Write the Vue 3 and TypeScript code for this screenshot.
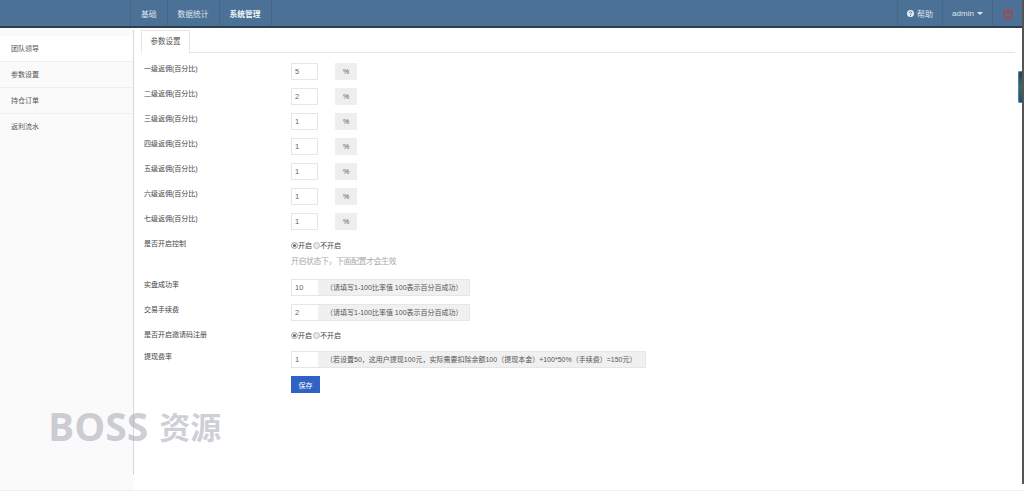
<script setup lang="ts">
const menus = ['基础', '数据统计', '系统管理']
const side = ['团队领导', '参数设置', '持仓订单', '返利流水']
const levels = [
  { label: '一级返佣(百分比)', value: '5' },
  { label: '二级返佣(百分比)', value: '2' },
  { label: '三级返佣(百分比)', value: '1' },
  { label: '四级返佣(百分比)', value: '1' },
  { label: '五级返佣(百分比)', value: '1' },
  { label: '六级返佣(百分比)', value: '1' },
  { label: '七级返佣(百分比)', value: '1' },
]
</script>

<template>
  <div class="page">
    <header class="top">
      <nav class="menus">
        <a v-for="(m, i) in menus" :key="m" class="menu" :class="{ strong: i === 2 }">{{ m }}</a>
      </nav>
      <div class="right">
        <a class="menu r help">
          <svg width="7" height="7" viewBox="0 0 16 16"><circle cx="8" cy="8" r="8" fill="#e8edf2" /><path d="M5.4 6.2c0-3.2 5.4-3.2 5.4-.2 0 2-2.6 1.900-2.600 3.900" fill="none" stroke="#4b7196" stroke-width="2.200" /><rect x="7" y="11" width="2.400" height="2.400" fill="#4b7196" /></svg>
          <span>帮助</span>
        </a>
        <a class="menu r admin">admin<i class="caret"></i></a>
        <a class="menu r power">
          <svg width="10" height="11" viewBox="0 0 16 16" fill="none" stroke="#bf3a3f" stroke-width="2.600" stroke-linecap="round"><path d="M4.800 3.700a6.400 6.400 0 1 0 6.400 0" /><path d="M8 1.500v6" /></svg>
        </a>
      </div>
    </header>
    <div class="body">
      <aside class="side">
        <a v-for="(s, i) in side" :key="s" class="side-item" :class="{ first: i === 0, last: i === 3 }">{{ s }}</a>
      </aside>
      <div class="rail"></div>
      <main class="main">
        <div class="tabs"><span class="tab">参数设置</span></div>
        <form class="form" @submit.prevent>
          <div v-for="l in levels" :key="l.label" class="row level">
            <label class="lab">{{ l.label }}</label>
            <input class="inp" :value="l.value" />
            <span class="pct">%</span>
          </div>
          <div class="row ctrl">
            <label class="lab">是否开启控制</label>
            <div>
              <div class="radios">
                <i class="radio on"></i><span>开启</span><i class="radio"></i><span>不开启</span>
              </div>
              <p class="hint">开启状态下，下面配置才会生效</p>
            </div>
          </div>
          <div class="row wide">
            <label class="lab">实盘成功率</label>
            <div class="group g1"><input class="inp" value="10" /><span class="addon">（请填写1-100比率值 100表示百分百成功）</span></div>
          </div>
          <div class="row wide">
            <label class="lab">交易手续费</label>
            <div class="group g1"><input class="inp" value="2" /><span class="addon">（请填写1-100比率值 100表示百分百成功）</span></div>
          </div>
          <div class="row invite">
            <label class="lab">是否开启邀请码注册</label>
            <div class="radios">
              <i class="radio on"></i><span>开启</span><i class="radio"></i><span>不开启</span>
            </div>
          </div>
          <div class="row wide">
            <label class="lab">提现费率</label>
            <div class="group g2"><input class="inp" value="1" /><span class="addon">（若设置50，这用户提现100元，实际需要扣除余额100（提现本金）+100*50%（手续费）=150元）</span></div>
          </div>
          <div class="row"><span class="lab"></span><button class="btn">保存</button></div>
        </form>
      </main>
    </div>
    <div class="strip"></div>
    <div class="handle"></div>
    <div class="mark"><span class="latin">BOSS</span><span class="cjk">资源</span></div>
  </div>
</template>

<style>
html, body { margin: 0; background: #fff; overflow: hidden; }
</style>

<style scoped>
.page {
  position: relative;
  width: 1024px;
  height: 492px;
  overflow: hidden;
  font-family: "Liberation Sans", "Noto Sans CJK SC", sans-serif;
  font-size: 7px;
  color: #555;
  background: #fff;
}
.top {
  display: flex;
  justify-content: space-between;
  height: 26px;
  padding: 0 2px 0 130px;
  background: #4b7196;
  border-bottom: 2px solid #2c3e50;
}
.menus, .right { display: flex; }
.menus { border-left: 1px solid #44688b; }
.menu {
  display: flex;
  align-items: center;
  justify-content: center;
  height: 26px;
  padding: 0 10px;
  color: #dfe6ec;
  border-right: 1px solid #44688b;
  font-size: 7.75px;
}
.menu.strong { color: #f4f6f8; font-weight: 700; }
.menu.r { border-right: none; border-left: 1px solid #44688b; padding: 0; font-size: 8px; }
.help { width: 44px; gap: 3px; }
.admin { width: 49px; gap: 3px; }
.power { width: 29px; }
.caret {
  width: 0; height: 0;
  border-left: 3px solid transparent;
  border-right: 3px solid transparent;
  border-top: 3px solid #dfe6ec;
}
.body {
  display: flex;
  height: 462px;
  border-bottom: 1px solid #eee;
}
.side {
  width: 133px;
  flex: none;
  background: #fafafa;
  display: flex;
  flex-direction: column;
  padding-top: 8px;
}
.side-item {
  height: 25px;
  line-height: 25px;
  padding-left: 11px;
  border-bottom: 1px solid #eee;
  color: #555;
}
.side-item.first { background: #fff; }
.side-item.last { border-bottom: none; }
.rail {
  width: 1px;
  flex: none;
  height: 445px;
  margin-top: 2px;
  background: #d8d8d8;
}
.main { flex: 1; padding: 2px 9px 0 7px; }
.tabs { height: 22px; border-bottom: 1px solid #e7e7e7; }
.tab {
  display: inline-block;
  height: 22px;
  line-height: 22px;
  width: 47px;
  font-size: 7.5px;
  text-align: center;
  background: #fff;
  border: 1px solid #e7e7e7;
  border-bottom-color: #fff;
}
.form { padding: 10px 0 0 3px; }
.row { display: flex; align-items: flex-start; }
.lab { width: 147px; flex: none; line-height: 11px; color: #444; }
.level { height: 17px; margin-bottom: 8px; }
.inp {
  box-sizing: border-box;
  width: 27px;
  height: 17px;
  border: 1px solid #e5e6e7;
  padding: 0 3px;
  font: inherit;
  font-size: 7.5px;
  color: #666;
  outline: none;
  background: #fff;
}
.pct {
  width: 22px;
  height: 17px;
  margin-left: 17px;
  background: #eee;
  text-align: center;
  line-height: 17px;
  color: #555;
}
.ctrl { height: 41px; }
.radios { display: flex; align-items: center; height: 12px; color: #444; margin-top: 1px; }
.invite .radios { margin-top: 0; }
.radio {
  width: 5px; height: 5px;
  border-radius: 50%;
  border: 1px solid #bbb;
  background: #e8e8e8;
}
.radio.on { background: #666; box-shadow: inset 0 0 0 1px #fff; }
.radios span { margin-right: 1px; }
.hint { margin: 5px 0 0; line-height: 12px; font-size: 8px; letter-spacing: -0.5px; color: #aaa; }
.wide { margin-bottom: 8px; }
.group { display: flex; height: 17px; box-sizing: border-box; border: 1px solid #e5e6e7; background: #f0f0f0; }
.g1 { width: 179px; }
.g2 { width: 355px; }
.group .inp { height: 15px; border: none; width: 26px; }
.addon { line-height: 15px; color: #555; padding-left: 8px; white-space: nowrap; font-size: 7px; }
.invite { height: 22px; }
.btn {
  width: 29px;
  height: 17px;
  border: none;
  background: #2f62c4;
  color: #fff;
  font: inherit;
  padding: 0;
}
.strip {
  position: absolute;
  right: 0;
  top: 0;
  width: 2px;
  height: 484px;
  background: #555;
}
.handle {
  position: absolute;
  right: 2px;
  top: 71px;
  width: 4px;
  height: 32px;
  background: linear-gradient(#2c3e50, #3d6b5a 50%, #24506a);
  border: 1px solid #3f86b8;
  border-right: none;
  box-sizing: border-box;
  border-radius: 2px 0 0 2px;
}
.mark {
  position: absolute;
  left: 48px;
  top: 404px;
  display: flex;
  align-items: center;
  gap: 11px;
  height: 42px;
  font-weight: 700;
  color: rgba(165, 167, 178, 0.55);
  white-space: nowrap;
}
.latin { font-family: "Open Sans", sans-serif; font-size: 39px; }
.cjk { font-family: "Noto Sans CJK SC", sans-serif; font-size: 31px; }
</style>
